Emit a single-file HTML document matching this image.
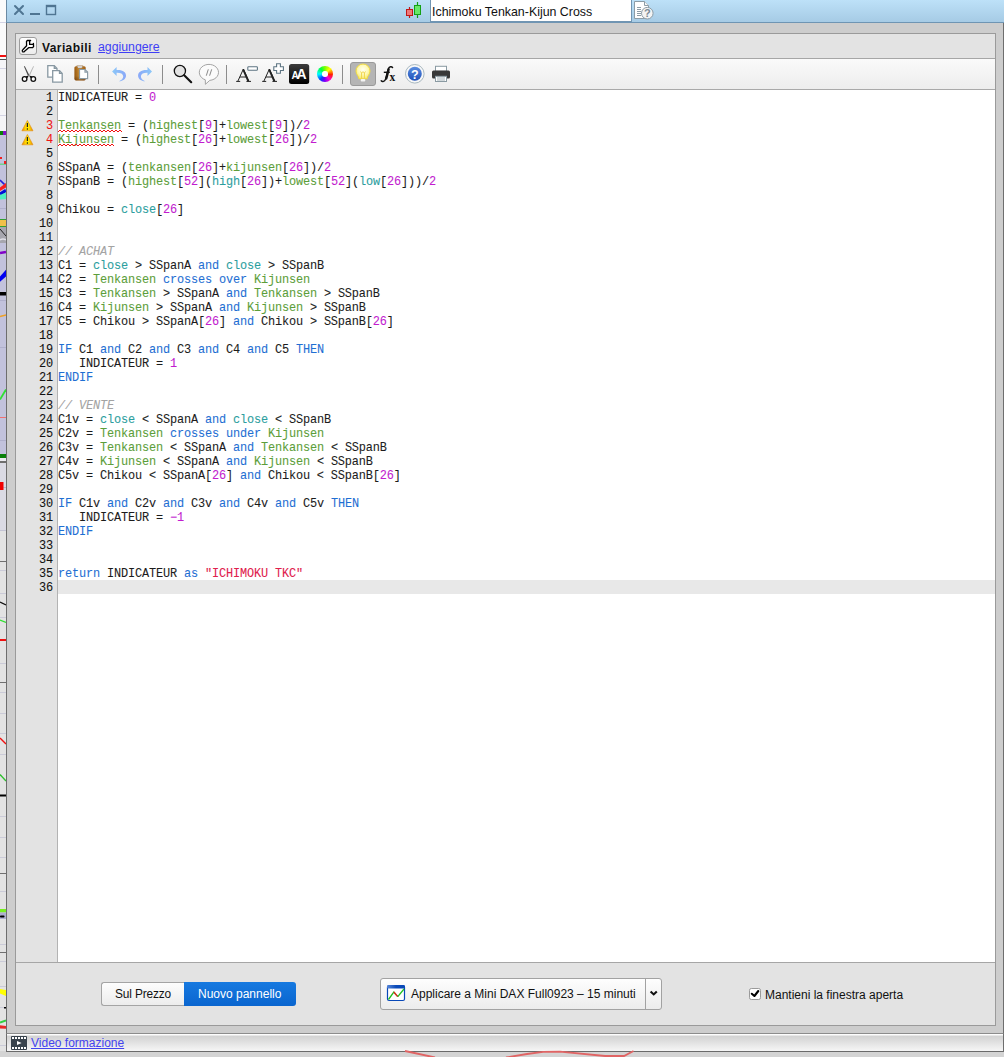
<!DOCTYPE html>
<html><head><meta charset="utf-8">
<style>
*{margin:0;padding:0;box-sizing:border-box}
html,body{width:1004px;height:1057px;overflow:hidden;background:#d4d4d4;font-family:"Liberation Sans",sans-serif;position:relative}
.a{position:absolute}
#strip{left:0;top:0;width:6px;height:1051px;background:#e4e4e4;overflow:hidden}
#title{left:6px;top:0;width:998px;height:23px;background:linear-gradient(#bde1f8,#a6cbe5);border-bottom:1px solid #6f95b3;border-left:1px solid #6b8aa3}
#frame{left:6px;top:23px;width:998px;height:1010px;background:#cdcdcd;border-left:1px solid #6e6e6e;border-right:1px solid #6e6e6e}
#panel{left:15px;top:33px;width:981px;height:993px;background:#e3e3e3;border:1px solid #9a9a9a}
#hdr{left:0;top:0;width:979px;height:25px;border-bottom:1px solid #a6a6a6}
#tb{left:0;top:25px;width:979px;height:31px;background:linear-gradient(#fafafa,#ededed);border-bottom:1px solid #a9a9a9}
#ed{left:0;top:56px;width:979px;height:873px;background:#fff;border-bottom:1px solid #a6a6a6}
#gut{left:0;top:0;width:42px;height:872px;background:#e3e3e3;border-right:1px solid #b3b3b3}
#code{left:42px;top:1px;width:937px;height:872px;font-family:"Liberation Mono",monospace;font-size:11.9px;letter-spacing:-0.14px;line-height:14px;-webkit-text-stroke:0.08px currentColor;color:#1c1c1c;white-space:pre}
.ln{position:absolute;left:0;width:37px;text-align:right;font-family:"Liberation Mono",monospace;font-size:11.9px;letter-spacing:-0.14px;line-height:14px;color:#111;margin-top:1px;-webkit-text-stroke:0.08px currentColor}
.cl{position:absolute;left:0;height:14px}
i{font-style:normal}
.g{color:#5c9e3a}.m{color:#c21ccf}.t{color:#2b9e9e}.b{color:#1f6fd3}.c{color:#a3a3a3;font-style:italic}.s{color:#e0204c}
#status{left:6px;top:1033px;width:998px;height:19px;border-top:1px solid #8c8c8c;border-bottom:1px solid #6a6a6a;border-left:1px solid #6e6e6e;border-right:1px solid #6e6e6e;background:linear-gradient(#fdfdfd 0,#fdfdfd 1px,#d2d2d2 2px,#f6f6f6)}
.sep{position:absolute;top:65px;width:1px;height:19px;background:#8a8a8a}
</style></head><body>
<div id="strip" class="a">
<svg class="a" style="left:0;top:0" width="6" height="1051">
 <rect x="0" y="0" width="6" height="59" fill="#fbfbfb"/>
 <rect x="0" y="59" width="6" height="72" fill="#f5f5f7"/>
 <g fill="#d4d4e4"><rect x="0" y="22" width="6" height="1"/><rect x="0" y="68" width="6" height="1"/><rect x="0" y="115" width="6" height="1"/></g>
 <rect x="0" y="55" width="6" height="2" fill="#f01010"/>
 <rect x="0" y="59" width="6" height="1" fill="#4e4e4e"/>
 <rect x="0" y="131" width="3" height="4" fill="#0a800a"/><rect x="3" y="131" width="3" height="4" fill="#8010c8"/>
 <rect x="0" y="135" width="6" height="327" fill="#c2c2dc"/>
 <g fill="#b0b0cc"><rect x="0" y="208" width="6" height="1"/><rect x="0" y="300" width="6" height="1"/><rect x="0" y="347" width="6" height="1"/><rect x="0" y="440" width="6" height="1"/></g>
 <rect x="0" y="157" width="2" height="2" fill="#f02020"/>
 <rect x="0" y="163.5" width="6" height="1.5" fill="#70d090"/>
 <rect x="4" y="161" width="2" height="3" fill="#f02020"/>
 <path d="M0 180 L6 186" stroke="#2020e0" stroke-width="1.6"/>
 <path d="M0 187.5 L6 183 L6 187.5 L0 191 Z" fill="#f82020"/>
 <path d="M0 194 L6 190.5" stroke="#0010d8" stroke-width="3.2"/>
 <path d="M0 195 L6 192.5 L6 199 L0 199.5 Z" fill="#50f0c0"/>
 <rect x="0" y="219" width="6" height="1" fill="#30a030"/>
 <rect x="0" y="220" width="6" height="6" fill="#f0c048"/>
 <rect x="0" y="226" width="6" height="1" fill="#30a030"/>
 <rect x="0" y="227" width="6" height="16" fill="#a6a6ae"/>
 <path d="M0 229 L6 236" stroke="#222" stroke-width="1"/>
 <path d="M0 240 Q3 238 6 240" stroke="#e0e0e8" stroke-width="1.5" fill="none"/>
 <path d="M0 253 L6 252" stroke="#8000c8" stroke-width="2.6"/>
 <path d="M0 276.6 L6 269.8 L6 276.6 L0 281.7 Z" fill="#0000f0"/>
 <rect x="0" y="292" width="6" height="3.5" fill="#000"/>
 <path d="M0 316.5 L6 315" stroke="#f0a020" stroke-width="1.5"/>
 <path d="M0 399.5 L6 389.5" stroke="#30e030" stroke-width="1.8"/>
 <rect x="0" y="417" width="6" height="1" fill="#f07070"/>
 <rect x="0" y="454" width="6" height="4" fill="#0a800a"/>
 <rect x="0" y="458" width="6" height="3" fill="#ececf2"/><rect x="0" y="461" width="6" height="2" fill="#6e6e6e"/>
 <rect x="0" y="463" width="6" height="68" fill="#dadae4"/><rect x="0" y="530" width="6" height="1" fill="#c4c4d4"/>
 <rect x="0" y="487" width="6" height="1" fill="#b8b8d0"/>
 <rect x="0" y="482" width="3.5" height="8" fill="#f00000"/>
 <rect x="0" y="531" width="6" height="520" fill="#e3e3e3"/>
 <g fill="#cbcbd8"><rect x="0" y="570" width="6" height="1"/><rect x="0" y="593" width="6" height="1"/><rect x="0" y="617" width="6" height="1"/><rect x="0" y="663" width="6" height="1"/><rect x="0" y="692" width="6" height="1"/><rect x="0" y="713" width="6" height="1"/><rect x="0" y="733" width="6" height="1"/><rect x="0" y="754" width="6" height="1"/><rect x="0" y="816" width="6" height="1"/><rect x="0" y="837" width="6" height="1"/><rect x="0" y="857" width="6" height="1"/><rect x="0" y="891" width="6" height="1"/><rect x="0" y="944" width="6" height="1"/><rect x="0" y="961" width="6" height="1"/><rect x="0" y="1007" width="6" height="1"/><rect x="0" y="986" width="6" height="1"/><rect x="0" y="1045" width="6" height="1"/></g>
 <g fill="#707070"><rect x="0" y="561" width="6" height="1"/><rect x="0" y="682" width="6" height="1"/><rect x="0" y="873" width="6" height="1"/><rect x="0" y="952" width="6" height="1"/></g>
 <path d="M0 602 L6 605" stroke="#111" stroke-width="1.3"/>
 <path d="M0 620 L6 622.5" stroke="#30e030" stroke-width="1.3"/>
 <rect x="0" y="639" width="6" height="2" fill="#f01010"/>
 <path d="M0 738 L6 744" stroke="#f01010" stroke-width="1.4"/>
 <path d="M0 774.5 L6 781" stroke="#30c030" stroke-width="1.4"/>
 <rect x="0" y="794.5" width="6" height="2" fill="#000"/>
 <rect x="0" y="909" width="6" height="3.5" fill="#78f020"/>
 <rect x="0" y="912.5" width="6" height="6.5" fill="#aeaed0"/>
 <rect x="0" y="915.5" width="4.5" height="2" rx="0.8" fill="#000"/>
 <path d="M0 989 L6 990 L6 996 L0 993.5 Z" fill="#ffff00"/>
 <rect x="4" y="1007" width="2" height="1.5" fill="#000"/>
 <path d="M0 1022.5 L6 1020.5" stroke="#30d040" stroke-width="2"/>
 <path d="M0 1025.3 L6 1026 L6 1028.8 L0 1028.6 Z" fill="#e82828"/>
</svg>

</div>
<div id="title" class="a"></div>
<div id="frame" class="a"></div>
<div id="panel" class="a">
  <div id="hdr" class="a"></div>
  <div id="tb" class="a"></div>
  <div id="ed" class="a">
    <div id="gut" class="a">
<div class="ln" style="top:0px">1</div>
<div class="ln" style="top:14px">2</div>
<div class="ln" style="color:#f01414;top:28px">3</div>
<div class="ln" style="color:#f01414;top:42px">4</div>
<div class="ln" style="top:56px">5</div>
<div class="ln" style="top:70px">6</div>
<div class="ln" style="top:84px">7</div>
<div class="ln" style="top:98px">8</div>
<div class="ln" style="top:112px">9</div>
<div class="ln" style="top:126px">10</div>
<div class="ln" style="top:140px">11</div>
<div class="ln" style="top:154px">12</div>
<div class="ln" style="top:168px">13</div>
<div class="ln" style="top:182px">14</div>
<div class="ln" style="top:196px">15</div>
<div class="ln" style="top:210px">16</div>
<div class="ln" style="top:224px">17</div>
<div class="ln" style="top:238px">18</div>
<div class="ln" style="top:252px">19</div>
<div class="ln" style="top:266px">20</div>
<div class="ln" style="top:280px">21</div>
<div class="ln" style="top:294px">22</div>
<div class="ln" style="top:308px">23</div>
<div class="ln" style="top:322px">24</div>
<div class="ln" style="top:336px">25</div>
<div class="ln" style="top:350px">26</div>
<div class="ln" style="top:364px">27</div>
<div class="ln" style="top:378px">28</div>
<div class="ln" style="top:392px">29</div>
<div class="ln" style="top:406px">30</div>
<div class="ln" style="top:420px">31</div>
<div class="ln" style="top:434px">32</div>
<div class="ln" style="top:448px">33</div>
<div class="ln" style="top:462px">34</div>
<div class="ln" style="top:476px">35</div>
<div class="ln" style="top:490px">36</div>
</div>
    <div id="hl" class="a" style="left:42px;top:490px;width:937px;height:14px;background:#e8e8e8"></div>
<div id="code" class="a">
<div class="cl" style="top:0px">INDICATEUR = <i class="m">0</i></div>
<div class="cl" style="top:14px"></div>
<div class="cl" style="top:28px"><i class="g">Tenkansen</i> = (<i class="g">highest</i>[<i class="m">9</i>]+<i class="g">lowest</i>[<i class="m">9</i>])/<i class="m">2</i></div>
<div class="cl" style="top:42px"><i class="g">Kijunsen</i> = (<i class="g">highest</i>[<i class="m">26</i>]+<i class="g">lowest</i>[<i class="m">26</i>])/<i class="m">2</i></div>
<div class="cl" style="top:56px"></div>
<div class="cl" style="top:70px">SSpanA = (<i class="g">tenkansen</i>[<i class="m">26</i>]+<i class="g">kijunsen</i>[<i class="m">26</i>])/<i class="m">2</i></div>
<div class="cl" style="top:84px">SSpanB = (<i class="g">highest</i>[<i class="m">52</i>](<i class="t">high</i>[<i class="m">26</i>])+<i class="g">lowest</i>[<i class="m">52</i>](<i class="t">low</i>[<i class="m">26</i>]))/<i class="m">2</i></div>
<div class="cl" style="top:98px"></div>
<div class="cl" style="top:112px">Chikou = <i class="t">close</i>[<i class="m">26</i>]</div>
<div class="cl" style="top:126px"></div>
<div class="cl" style="top:140px"></div>
<div class="cl" style="top:154px"><i class="c">// ACHAT</i></div>
<div class="cl" style="top:168px">C1 = <i class="t">close</i> &gt; SSpanA <i class="b">and</i> <i class="t">close</i> &gt; SSpanB</div>
<div class="cl" style="top:182px">C2 = <i class="g">Tenkansen</i> <i class="b">crosses over</i> <i class="g">Kijunsen</i></div>
<div class="cl" style="top:196px">C3 = <i class="g">Tenkansen</i> &gt; SSpanA <i class="b">and</i> <i class="g">Tenkansen</i> &gt; SSpanB</div>
<div class="cl" style="top:210px">C4 = <i class="g">Kijunsen</i> &gt; SSpanA <i class="b">and</i> <i class="g">Kijunsen</i> &gt; SSpanB</div>
<div class="cl" style="top:224px">C5 = Chikou &gt; SSpanA[<i class="m">26</i>] <i class="b">and</i> Chikou &gt; SSpanB[<i class="m">26</i>]</div>
<div class="cl" style="top:238px"></div>
<div class="cl" style="top:252px"><i class="b">IF</i> C1 <i class="b">and</i> C2 <i class="b">and</i> C3 <i class="b">and</i> C4 <i class="b">and</i> C5 <i class="b">THEN</i></div>
<div class="cl" style="top:266px">   INDICATEUR = <i class="m">1</i></div>
<div class="cl" style="top:280px"><i class="b">ENDIF</i></div>
<div class="cl" style="top:294px"></div>
<div class="cl" style="top:308px"><i class="c">// VENTE</i></div>
<div class="cl" style="top:322px">C1v = <i class="t">close</i> &lt; SSpanA <i class="b">and</i> <i class="t">close</i> &lt; SSpanB</div>
<div class="cl" style="top:336px">C2v = <i class="g">Tenkansen</i> <i class="b">crosses under</i> <i class="g">Kijunsen</i></div>
<div class="cl" style="top:350px">C3v = <i class="g">Tenkansen</i> &lt; SSpanA <i class="b">and</i> <i class="g">Tenkansen</i> &lt; SSpanB</div>
<div class="cl" style="top:364px">C4v = <i class="g">Kijunsen</i> &lt; SSpanA <i class="b">and</i> <i class="g">Kijunsen</i> &lt; SSpanB</div>
<div class="cl" style="top:378px">C5v = Chikou &lt; SSpanA[<i class="m">26</i>] <i class="b">and</i> Chikou &lt; SSpanB[<i class="m">26</i>]</div>
<div class="cl" style="top:392px"></div>
<div class="cl" style="top:406px"><i class="b">IF</i> C1v <i class="b">and</i> C2v <i class="b">and</i> C3v <i class="b">and</i> C4v <i class="b">and</i> C5v <i class="b">THEN</i></div>
<div class="cl" style="top:420px">   INDICATEUR = <i class="m">&#8722;1</i></div>
<div class="cl" style="top:434px"><i class="b">ENDIF</i></div>
<div class="cl" style="top:448px"></div>
<div class="cl" style="top:462px"></div>
<div class="cl" style="top:476px"><i class="b">return</i> INDICATEUR <i class="b">as</i> <i class="s">"ICHIMOKU TKC"</i></div>
<div class="cl" style="top:490px"></div>
</div>
  </div>
</div>
<div id="status" class="a"></div>
<div id="ov">
<!-- TITLE BAR ICONS -->
<svg class="a" style="left:0;top:0" width="1004" height="23">
 <g stroke="#4f7592" stroke-width="2" fill="none">
  <path d="M15 6 L23 14 M23 6 L15 14" stroke-linecap="round"/>
  <path d="M30 14 H40"/>
  <rect x="46.5" y="5.5" width="9" height="9" stroke-width="1.4"/>
  <path d="M46 6.2 H56" stroke-width="2"/>
 </g>
 <!-- candles -->
 <path d="M409.5 7 V18" stroke="#c01818" stroke-width="1.2"/>
 <rect x="406.5" y="9.5" width="6" height="6" fill="#f07878" stroke="#c01818" stroke-width="1"/>
 <path d="M417.5 2 V18" stroke="#14a014" stroke-width="1.2"/>
 <rect x="414.5" y="5.5" width="6" height="9" fill="#68e868" stroke="#14a014" stroke-width="1"/>
 <!-- field -->
 <rect x="430.5" y="-1" width="201" height="22.5" fill="#fff" stroke="#7195b2" stroke-width="1"/>
 <!-- help doc -->
 <path d="M634.5 1.5 H644.5 L648.5 5.5 V18.5 H634.5 Z" fill="#fff" stroke="#8c9ca6" stroke-width="1"/>
 <path d="M644.5 1.5 V5.5 H648.5" fill="#f6f6f6" stroke="#8c9ca6" stroke-width="1"/>
 <g stroke="#8c9ca6" stroke-width="1"><path d="M637 7.5H641M637 9.5H641M637 11.5H641M637 13.5H641M637 15.5H641"/></g>
 <circle cx="647.3" cy="13.2" r="5.8" fill="#f4f4f4" stroke="#8c9ca6" stroke-width="1"/>
 <text x="647.3" y="17.2" text-anchor="middle" font-family="Liberation Sans" font-weight="bold" font-size="11" fill="#7a8a94">?</text>
</svg>
<div class="a" style="left:432px;top:5px;font-size:12.4px;color:#111;white-space:nowrap">Ichimoku Tenkan-Kijun Cross</div>

<!-- HEADER -->
<div class="a" style="left:19px;top:37px;width:18px;height:18px;border:1px solid #9c9c9c;border-radius:3px;background:linear-gradient(#ffffff,#ececec)"></div>
<svg class="a" style="left:0;top:0" width="460" height="90">
 <path d="M9.3 5.5 L12.6 5.5 L11.6 6.3 L11.6 9.4 L15.4 9.4 L15.4 8.4 L15.6 11.6 L14.7 12.5 L10.6 12.7 L6.3 16.6 Q5.1 17.4 4.4 16.3 Q4 15.3 4.8 14.7 L8.6 10.8 L8.5 6.5 Z" transform="translate(18 35)" fill="#fff" stroke="#000" stroke-width="1.3" stroke-linejoin="round"/>
 <!-- scissors -->
 <path d="M23.9 66.2 L24.9 66.2 L29.4 75.3 L27.9 75.8 Z" fill="#4a4a4a"/>
 <path d="M34 66.2 L33.2 66.2 L28.5 75.8 L29.9 75.6 Z" fill="#b4b4b4"/>
 <circle cx="24.6" cy="79" r="2.3" fill="#fff" stroke="#111" stroke-width="1.3"/>
 <circle cx="33.3" cy="79" r="2.3" fill="#fff" stroke="#111" stroke-width="1.3"/>
 <path d="M25.3 76.4 L28.7 75.5 L27.7 78 Z" fill="#111"/>
 <path d="M32.6 76.4 L29.2 75.5 L30.2 78 Z" fill="#111"/>
 <!-- copy -->
 <path d="M47.8 65.7 H54.3 L57 68.4 V77.2 H47.8 Z" fill="#fff" stroke="#8898a2" stroke-width="1.3"/>
 <path d="M54.3 65.7 V68.4 H57" fill="none" stroke="#8898a2" stroke-width="1.3"/>
 <path d="M52.7 70.7 H59.5 L62.2 73.4 V82.2 H52.7 Z" fill="#fff" stroke="#8898a2" stroke-width="1.3"/>
 <path d="M59.5 70.7 V73.4 H62.2" fill="none" stroke="#8898a2" stroke-width="1.3"/>
 <!-- paste -->
 <defs>
  <linearGradient id="brown" x1="0" x2="1" y1="0" y2="0"><stop offset="0" stop-color="#9a5a10"/><stop offset="0.4" stop-color="#c88a30"/><stop offset="1" stop-color="#a06018"/></linearGradient>
  <linearGradient id="brv" x1="0" x2="0" y1="0" y2="1"><stop offset="0" stop-color="#000" stop-opacity="0"/><stop offset="0.7" stop-color="#000" stop-opacity="0.05"/><stop offset="1" stop-color="#401000" stop-opacity="0.35"/></linearGradient>
  <linearGradient id="blu" x1="0" x2="1"><stop offset="0" stop-color="#8cc8f8"/><stop offset="1" stop-color="#8aa8f8"/></linearGradient>
  <linearGradient id="blu2" x1="1" x2="0"><stop offset="0" stop-color="#8cc8f8"/><stop offset="1" stop-color="#8aa8f8"/></linearGradient>
  <radialGradient id="bulb" cx="0.5" cy="0.4" r="0.6"><stop offset="0" stop-color="#fffff4"/><stop offset="0.55" stop-color="#fffab8"/><stop offset="1" stop-color="#f8ea70"/></radialGradient>
  <linearGradient id="hb" x1="0" x2="0" y1="0" y2="1"><stop offset="0" stop-color="#5c8ee0"/><stop offset="1" stop-color="#1d4fb8"/></linearGradient>
 </defs>
 <rect x="74.4" y="66.2" width="11.3" height="14.2" rx="1.6" fill="url(#brown)"/>
 <rect x="74.4" y="66.2" width="11.3" height="14.2" rx="1.6" fill="url(#brv)"/><path d="M76.8 65.8 H83 L82 68.2 H77.8 Z" fill="#e4e8ee" stroke="#8a5a20" stroke-width="0.5"/>
 <path d="M79.5 69.5 H85 L87.6 72.1 V78.6 H79.5 Z" fill="#fff" stroke="#8c9ca6" stroke-width="1.2"/>
 <path d="M85 69.5 V72.1 H87.6" fill="none" stroke="#8c9ca6" stroke-width="1.2"/>
 <!-- sep -->
 <rect x="98" y="65" width="1" height="19" fill="#8c8c8c"/>
 <!-- undo -->
 <path d="M112.1 71.4 L116.6 67.1 V70.1 C123 69.8 126.2 72.3 126 76 C125.8 79 123 81.2 119 81.3 C121.5 80.3 123.3 78.4 123.2 76.3 C123 73.8 120.5 72.7 116.6 72.8 V75.9 Z" fill="url(#blu)"/>
 <path d="M152 71.4 L147.5 67.1 V70.1 C141.1 69.8 137.9 72.3 138.1 76 C138.3 79 141.1 81.2 145.1 81.3 C142.6 80.3 140.8 78.4 140.9 76.3 C141.1 73.8 143.6 72.7 147.5 72.8 V75.9 Z" fill="url(#blu2)"/>
 <rect x="162" y="65" width="1" height="19" fill="#8c8c8c"/>
 <!-- magnifier -->
 <circle cx="179.9" cy="71" r="5.6" fill="#e2e2e2" stroke="#111" stroke-width="1.3"/>
 <path d="M184.2 75.2 L191.2 82.2" stroke="#111" stroke-width="2.1" stroke-linecap="round"/>
 <!-- comment -->
 <path d="M205.3 79.8 A9.6 8 0 1 1 209.8 80.35 L205.4 84.3 Z" fill="#fbfbfb" stroke="#a4a4a4" stroke-width="1"/>
 <path d="M208.3 69.3 L206.3 75.7 M211.7 69.3 L209.6 75.7" stroke="#8a8a8a" stroke-width="1"/>
 <rect x="226" y="65" width="1" height="19" fill="#8c8c8c"/>
 <!-- A- A+ -->
 <path d="M243.4 69 L237.8 81.3 M243.4 69 L248.9 81.3 M239.9 77 H246.9 M236.2 81.4 H240.2 M246.4 81.4 H251" fill="none" stroke="#222" stroke-width="1"/><path d="M243.1 69.3 L248.4 81.3" stroke="#222" stroke-width="1.9"/>
 <rect x="247.8" y="66.8" width="9.6" height="3.4" rx="0.8" fill="#fff" stroke="#5d7482" stroke-width="1.1"/>
 <path d="M269.4 69 L263.8 81.3 M269.4 69 L274.9 81.3 M265.9 77 H272.9 M262.2 81.4 H266.2 M272.4 81.4 H277" fill="none" stroke="#222" stroke-width="1"/><path d="M269.1 69.3 L274.4 81.3" stroke="#222" stroke-width="1.9"/>
 <path d="M276.6 63.8 H280.4 V66.8 H283.4 V70.5 H280.4 V73.3 H276.6 V70.5 H273.8 V66.8 H276.6 Z" fill="#fff" stroke="#5d7482" stroke-width="1.1"/>
 <!-- AA -->
 <defs><linearGradient id="aag" x1="0" x2="0" y1="0" y2="1"><stop offset="0" stop-color="#3c3c3c"/><stop offset="1" stop-color="#000"/></linearGradient></defs><rect x="289" y="64" width="20.2" height="20" rx="2.5" fill="url(#aag)"/>
 <text x="291.5" y="78.7" font-family="Liberation Sans" font-weight="bold" font-size="10" fill="#fff">A</text>
 <text x="296.6" y="78.7" font-family="Liberation Sans" font-weight="bold" font-size="14" fill="#fff">A</text>
 <!-- color wheel via foreignObject-like div below -->
 <rect x="342" y="65" width="1" height="19" fill="#8c8c8c"/>
 <!-- bulb pressed -->
 <rect x="350.5" y="62.5" width="25" height="23" rx="2.5" fill="#b5b5b5" stroke="#9a9a9a" stroke-width="1"/>
 <path d="M358.8 78.8 C358.8 76 356 74.5 356 71 A7 7 0 0 1 370 71 C370 74.5 367.2 76 367.2 78.8 Z" fill="url(#bulb)" stroke="#f2dc40" stroke-width="1"/>
 <path d="M360.5 71.5 L361.6 73 L363 71.7 L364.4 73 L365.5 71.5 M361.6 73 V78.5 M364.4 73 V78.5" fill="none" stroke="#eed040" stroke-width="0.9"/>
 <rect x="360.7" y="79" width="4.6" height="2.6" rx="1" fill="#f4f4f4"/>
 <!-- fx -->
 <path d="M392.6 67.6 C391.8 66.2 389.4 66.3 388.4 68.6 C387.3 71.2 386.6 76.5 385.4 79.4 C384.6 81.4 382.4 82 381.2 80.8" fill="none" stroke="#111" stroke-width="1.4" stroke-linecap="round"/><path d="M388.6 69.5 C387.8 72 387.2 76 386.2 78.5" fill="none" stroke="#111" stroke-width="2.4" stroke-linecap="round"/>
 <path d="M383.8 72.3 H389.8" stroke="#111" stroke-width="1.4"/>
 <text x="389.6" y="81.3" font-family="Liberation Serif" font-weight="bold" font-size="11.5" fill="#111">x</text>
 <!-- help -->
 <circle cx="414.8" cy="73.8" r="9.3" fill="#f8f8f8" stroke="#a8b8c0" stroke-width="1"/>
 <circle cx="414.8" cy="73.8" r="7" fill="url(#hb)"/>
 <text x="414.8" y="78.6" text-anchor="middle" font-family="Liberation Sans" font-weight="bold" font-size="12.5" fill="#fff">?</text>
 <!-- printer -->
 <rect x="435.5" y="66.3" width="11" height="5" fill="#fff" stroke="#8a9aa2" stroke-width="1"/>
 <rect x="432" y="70.5" width="18" height="8" rx="1.5" fill="#383838"/>
 <rect x="435.5" y="76.3" width="11" height="5.2" fill="#fff" stroke="#8a9aa2" stroke-width="1"/>
 <path d="M437 78 H445 M437 80 H445" stroke="#9aa8b0" stroke-width="0.9"/>
</svg>
<div class="a" style="left:316.8px;top:65.8px;width:16.2px;height:16.2px;border-radius:50%;background:conic-gradient(from 0deg,#80ff00,#ffff00 45deg,#ff2000 95deg,#ff00d0 140deg,#6000ff 190deg,#0040ff 220deg,#00ffff 270deg,#00ff40 320deg,#80ff00)"></div>
<div class="a" style="left:322.1px;top:71.1px;width:5.6px;height:5.6px;border-radius:50%;background:#fff"></div>
<div class="a" style="left:42px;top:41px;font-size:12px;letter-spacing:0.4px;font-weight:bold;color:#111;white-space:nowrap">Variabili</div>
<div class="a" style="left:98px;top:40px;font-size:12.3px;color:#3f3ff5;text-decoration:underline;white-space:nowrap">aggiungere</div>

<!-- WARNINGS + squiggles -->
<svg class="a" style="left:0;top:0" width="130" height="150">
 <defs>
  <linearGradient id="warn" x1="0" x2="1"><stop offset="0" stop-color="#e07a00"/><stop offset="0.3" stop-color="#ffd000"/><stop offset="0.6" stop-color="#ffe800"/><stop offset="1" stop-color="#e88800"/></linearGradient>
 </defs>
 <path d="M27.4 120.4 L33 130.8 H21.9 Z" fill="url(#warn)" stroke="#e08a10" stroke-width="0.6" stroke-linejoin="round"/>
 <path d="M27.4 123 V127" stroke="#222" stroke-width="1.2"/><circle cx="27.4" cy="129" r="0.7" fill="#111"/>
 <path d="M27.4 134.4 L33 144.8 H21.9 Z" fill="url(#warn)" stroke="#e08a10" stroke-width="0.6" stroke-linejoin="round"/>
 <path d="M27.4 137 V141" stroke="#222" stroke-width="1.2"/><circle cx="27.4" cy="143" r="0.7" fill="#111"/>
 <path d="M58 132 L60 130 L62 132 L64 130 L66 132 L68 130 L70 132 L72 130 L74 132 L76 130 L78 132 L80 130 L82 132 L84 130 L86 132 L88 130 L90 132 L92 130 L94 132 L96 130 L98 132 L100 130 L102 132 L104 130 L106 132 L108 130 L110 132 L112 130 L114 132 L116 130 L118 132 L120 130 L122 132" fill="none" stroke="#f01010" stroke-width="1"/>
 <path d="M58 146 L60 144 L62 146 L64 144 L66 146 L68 144 L70 146 L72 144 L74 146 L76 144 L78 146 L80 144 L82 146 L84 144 L86 146 L88 144 L90 146 L92 144 L94 146 L96 144 L98 146 L100 144 L102 146 L104 144 L106 146 L108 144 L110 146 L112 144 L114 146" fill="none" stroke="#f01010" stroke-width="1"/>
</svg>
<!-- BOTTOM CONTROLS -->
<div class="a" style="left:101px;top:982px;width:84px;height:24px;border:1px solid #a4a4a4;border-right:none;border-radius:3px 0 0 3px;background:linear-gradient(#fdfdfd,#ececec)"></div>
<div class="a" style="left:184px;top:982px;width:112px;height:24px;border-radius:0 3px 3px 0;background:linear-gradient(#1679e0,#0a65cf)"></div>
<div class="a" style="left:115px;top:987px;font-size:11.9px;letter-spacing:-0.14px;color:#111;white-space:nowrap">Sul Prezzo</div>
<div class="a" style="left:198px;top:987px;font-size:12px;color:#fff;white-space:nowrap">Nuovo pannello</div>
<div class="a" style="left:380px;top:978px;width:282px;height:32px;border:1px solid #a2a2a2;border-radius:3px;background:linear-gradient(#fefefe,#ececec)"></div>
<div class="a" style="left:645px;top:979px;width:1px;height:30px;background:#a2a2a2"></div>
<div class="a" style="left:411px;top:987px;font-size:12px;color:#111;white-space:nowrap">Applicare a Mini DAX Full0923 – 15 minuti</div>
<svg class="a" style="left:0;top:960px" width="1004" height="100">
 <rect x="387.5" y="25.5" width="17" height="15" rx="1.5" fill="#fff" stroke="#0848b8" stroke-width="1.2"/>
 <defs><linearGradient id="tbar" x1="0" x2="1"><stop offset="0" stop-color="#5a88d8"/><stop offset="0.5" stop-color="#0a4ab8"/><stop offset="1" stop-color="#0848b8"/></linearGradient></defs><rect x="387" y="25" width="18" height="3.6" rx="1.5" fill="url(#tbar)"/>
 <path d="M388.5 39.5 L393.8 32 L397.8 36.7" fill="none" stroke="#20c020" stroke-width="1.3"/>
 <path d="M393.8 32 L397.8 36.7" fill="none" stroke="#f02020" stroke-width="1.3"/>
 <path d="M397.8 36.7 L404 29" fill="none" stroke="#20c020" stroke-width="1.3"/>
 <path d="M650.6 31.4 L653.7 34.4 L656.8 31.4" fill="none" stroke="#111" stroke-width="2.1"/>
 <rect x="749.5" y="28.5" width="11" height="11" rx="1.8" fill="#fff" stroke="#9a9a9a" stroke-width="1"/>
 <path d="M751.8 33.8 L754.4 36 L758.3 31" fill="none" stroke="#000" stroke-width="2.1" stroke-linecap="round" stroke-linejoin="round"/>
 <!-- film -->
 <rect x="11" y="76" width="16" height="14" rx="1" fill="#38424c"/>
 <g fill="#fff"><rect x="12" y="77" width="2" height="2"/><rect x="15" y="77" width="2" height="2"/><rect x="18" y="77" width="2" height="2"/><rect x="21" y="77" width="2" height="2"/><rect x="24" y="77" width="2" height="2"/>
 <rect x="12" y="87" width="2" height="2"/><rect x="15" y="87" width="2" height="2"/><rect x="18" y="87" width="2" height="2"/><rect x="21" y="87" width="2" height="2"/><rect x="24" y="87" width="2" height="2"/>
 <path d="M17 81 L21.6 83 L17 85 Z"/></g>
 <!-- chart red line below status -->
 <path d="M405 91 L435 97.5 M506 97.5 L527 94 L543 91.8 L560 91.7 L605 96 L624 96 L633.5 91" fill="none" stroke="#e06464" stroke-width="1.8"/>
</svg>
<div class="a" style="left:765px;top:988px;font-size:12px;color:#111;white-space:nowrap">Mantieni la finestra aperta</div>
<div class="a" style="left:31px;top:1036px;font-size:12px;color:#4343ef;text-decoration:underline;white-space:nowrap">Video formazione</div>

</div>
</body></html>
